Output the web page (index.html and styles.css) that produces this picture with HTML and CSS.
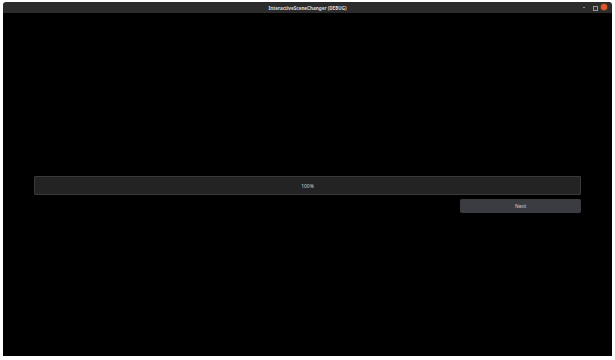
FILE: index.html
```html
<!DOCTYPE html>
<html lang="en">
<head>
  <meta charset="UTF-8">
  <title>InteractiveSceneChanger (DEBUG)</title>
  <link rel="stylesheet" href="styles.css">
</head>
<body>
  <div class="window">
    <div class="titlebar">
      <span class="title">InteractiveSceneChanger (DEBUG)</span>
      <div class="controls">
        <span class="ctl min"></span>
        <span class="ctl max"></span>
        <span class="ctl close"></span>
      </div>
    </div>
    <div class="content">
      <div class="progress"><span>100%</span></div>
      <button class="next">Next</button>
    </div>
  </div>
</body>
</html>
```

FILE: styles.css
```css
* {
  box-sizing: border-box;
  font-family: 'Noto Sans', sans-serif;
}

body {
  margin: 0;
  background: #ffffff;
}

.window {
  margin: 2px 3px 0 3px;
  height: 354px;
  display: flex;
  flex-direction: column;
  border-radius: 3px 3px 0 0;
  overflow: hidden;
}

.titlebar {
  height: 11px;
  background: #2c2c2c;
  position: relative;
  display: flex;
  justify-content: center;
  align-items: center;
}

.title {
  color: #dcdcdc;
  font-size: 4.6px;
  font-weight: 700;
}

.controls {
  position: absolute;
  right: 5px;
  top: 2px;
  display: flex;
  align-items: center;
  gap: 4px;
}

.ctl {
  width: 6px;
  height: 6px;
  display: block;
  position: relative;
}

.min::after {
  content: "";
  position: absolute;
  left: 2px;
  top: 3px;
  width: 2px;
  height: 1px;
  background: #8a8a8a;
}

.max::after {
  content: "";
  position: absolute;
  left: 1.5px;
  top: 1.5px;
  width: 3px;
  height: 3px;
  border: 1px solid #9a9a9a;
}

.close {
  border-radius: 50%;
  background: #e05a2b;
  box-shadow: 0 0 2px #e8602c;
}

.content {
  flex: 1;
  background: #000000;
  display: flex;
  flex-direction: column;
  align-items: stretch;
  padding: 163px 31px 0 31px;
  gap: 4px;
}

.progress {
  height: 19px;
  background: #232323;
  border: 1px solid #3a3a3a;
  border-radius: 1px;
  display: flex;
  justify-content: center;
  align-items: center;
}

.progress span {
  color: #cfcfcf;
  font-size: 5px;
}

.next {
  align-self: flex-end;
  width: 121px;
  height: 14px;
  padding: 0;
  background: #3b3b42;
  border: none;
  border-radius: 2px;
  color: #d0d0d0;
  font-size: 5px;
}
```
